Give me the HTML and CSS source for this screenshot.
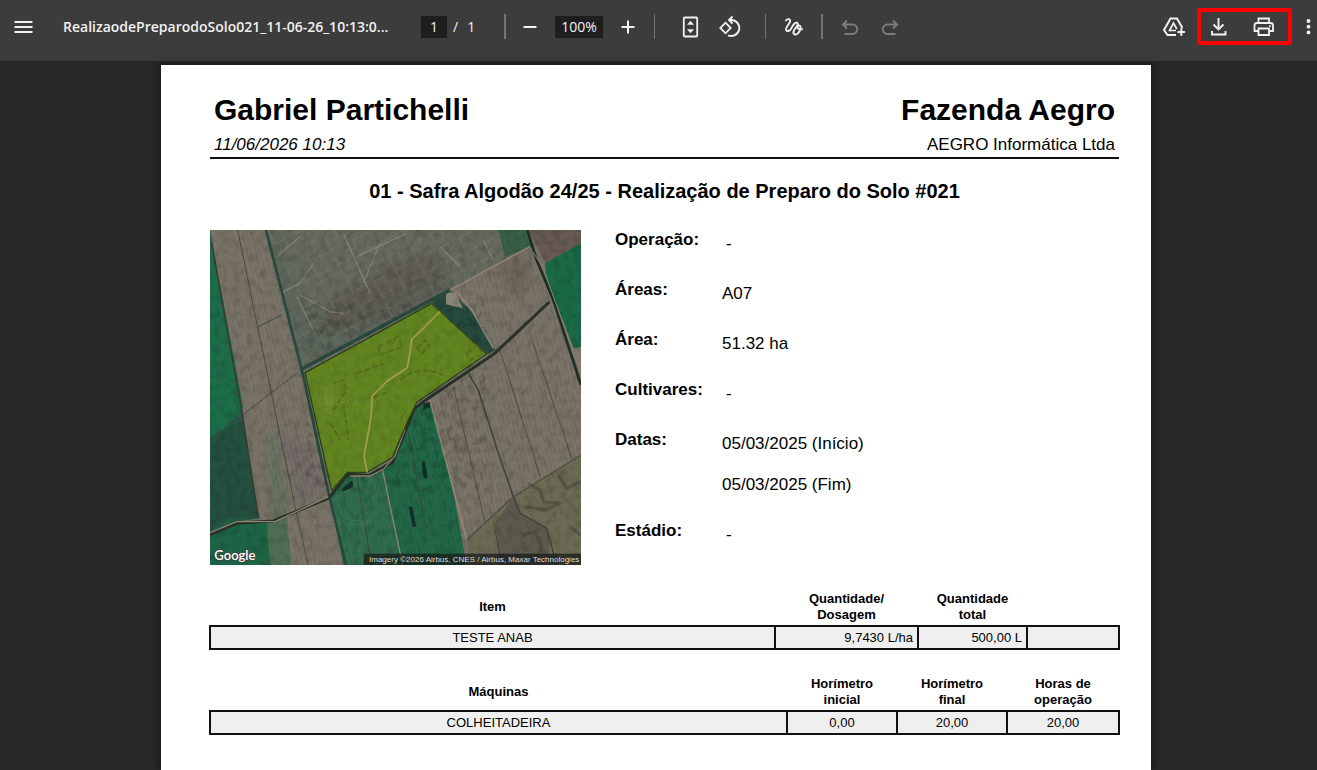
FILE: index.html
```html
<!DOCTYPE html>
<html lang="pt-BR">
<head>
<meta charset="utf-8">
<meta name="viewport" content="width=device-width, initial-scale=1">
<title>Realização de Preparo do Solo #021</title>
<link rel="stylesheet" href="styles.css">
</head>
<body>
<header class="toolbar">
  <button class="icon-btn" type="button" aria-label="Menu">
    <svg viewBox="0 0 24 24"><path d="M2.500 7h18M2.500 12h18M2.500 17h18" stroke-width="1.800"/></svg>
  </button>
  <span class="file-name">RealizaodePreparodoSolo021_11-06-26_10:13:0...</span>
  <div class="pager">
    <input class="field page-field" type="text" value="1" aria-label="Página">
    <span>/</span><span class="page-total">1</span>
  </div>
  <span class="divider thick"></span>
  <div class="tools zoom">
    <button class="icon-btn" type="button" aria-label="Diminuir zoom">
      <svg viewBox="0 0 24 24"><path d="M5.500 12h13" stroke-width="2"/></svg>
    </button>
    <input class="field zoom-field" type="text" value="100%" aria-label="Zoom">
    <button class="icon-btn" type="button" aria-label="Aumentar zoom">
      <svg viewBox="0 0 24 24"><path d="M5.500 12h13M12 5.500v13" stroke-width="2"/></svg>
    </button>
  </div>
  <span class="divider"></span>
  <div class="tools view">
    <button class="icon-btn" type="button" aria-label="Ajustar à página">
      <svg viewBox="0 0 24 24"><rect x="5.800" y="2.500" width="13.400" height="19" rx="1" stroke-width="1.800"/><path d="M12.500 5.800l3.500 4h-7zM12.500 18.300l3.500-4h-7z" fill="currentColor" stroke="none"/></svg>
    </button>
    <button class="icon-btn" type="button" aria-label="Girar">
      <svg viewBox="0 0 24 24"><path d="M7.500 7.700l5.200 5.300-5.200 5.300L2.300 13z" stroke-width="1.800"/><path d="M11 5h2.500a8 8 0 1 1-3.500 15.300M14.500 1.500L11 5l3.500 3.700" stroke-width="1.900"/></svg>
    </button>
  </div>
  <span class="divider"></span>
  <div class="tools ink">
    <button class="icon-btn" type="button" aria-label="Desenhar">
      <svg viewBox="0 0 24 24"><path d="M4.500 6c2-2.800 5-2.300 4.600.3C8.700 9 4.800 11.700 5 14.500c.3 2.900 4 1.700 5.600-1.700 1.400-3 4-6 5.700-4.900 2.300 1.700-2.700 5.300-3.700 8.300-.9 3 2 4.500 4.300 2.200 2.600-2.600 3.600-7.200 1.500-7.800-2.500-.5-4.200 4.300 3.400 3.500" stroke-width="1.900"/></svg>
    </button>
  </div>
  <span class="divider thick"></span>
  <div class="tools history">
    <button class="icon-btn" type="button" aria-label="Desfazer" disabled>
      <svg viewBox="0 0 24 24"><path d="M9 5.500l-4 4 4 4M5 9.500h9.500a4.700 4.700 0 0 1 0 9.400H6.500" stroke-width="2"/></svg>
    </button>
    <button class="icon-btn" type="button" aria-label="Refazer" disabled>
      <svg viewBox="0 0 24 24"><path d="M15 5.500l4 4-4 4M19 9.500H9.500a4.700 4.700 0 0 0 0 9.400h8" stroke-width="2"/></svg>
    </button>
  </div>
  <div class="actions">
    <button class="icon-btn" type="button" aria-label="Salvar no Google Drive">
      <svg viewBox="0 0 24 24"><path d="M14 20H5.500L2 15 8.500 3.500H15L20.500 13" stroke-width="2"/><path d="M14 15.500H7.500l4-7.500 3.300 6" stroke-width="1.700"/><path d="M15.500 17h7.500M19.300 13.200v7.500" stroke-width="2"/></svg>
    </button>
    <div class="highlight">
      <button class="icon-btn" type="button" aria-label="Baixar">
        <svg viewBox="0 0 24 24"><path d="M11.500 3v11M6.500 9.500l5 5 5-5M5 16v3.500h13.500V16" stroke-width="1.900"/></svg>
      </button>
      <button class="icon-btn" type="button" aria-label="Imprimir">
        <svg viewBox="0 0 24 24"><path d="M6.500 8V3.500H17V8M6.500 16h-4v-5.500Q2.500 8 5 8h13.500q2.500 0 2.500 2.500V16h-4M6.500 13.500H17V20H6.500z" stroke-width="1.800"/><circle cx="18" cy="11" r="1" fill="currentColor" stroke="none"/></svg>
      </button>
    </div>
    <button class="icon-btn more" type="button" aria-label="Mais ações">
      <svg viewBox="0 0 16 24"><g fill="currentColor" stroke="none"><circle cx="8.500" cy="6" r="1.900"/><circle cx="8.500" cy="11.700" r="1.900"/><circle cx="8.500" cy="17.400" r="1.900"/></g></svg>
    </button>
  </div>
</header>

<main class="viewer">
  <article class="sheet">
    <header class="letterhead">
      <div>
        <h1>Gabriel Partichelli</h1>
        <p><em>11/06/2026 10:13</em></p>
      </div>
      <div class="farm">
        <h1>Fazenda Aegro</h1>
        <p>AEGRO Informática Ltda</p>
      </div>
    </header>

    <h2>01 - Safra Algodão 24/25 - Realização de Preparo do Solo #021</h2>

    <section class="summary">
      <svg class="map" viewBox="30 30 1113 1005" role="img" aria-label="Mapa da área A07">
        <defs>
          <filter id="grain" x="0" y="0" width="100%" height="100%">
            <feTurbulence type="fractalNoise" baseFrequency="0.05 0.04" numOctaves="4" seed="8"/>
            <feColorMatrix values="0 0 0 0 0  0 0 0 0 0  0 0 0 0 0  1.600 0 0 0 -0.660"/>
          </filter>
          <filter id="soft" x="-10%" y="-10%" width="120%" height="120%"><feGaussianBlur stdDeviation="14"/></filter>
          <pattern id="furrow" width="13" height="60" patternUnits="userSpaceOnUse" patternTransform="rotate(-14)">
            <path d="M3 0v60" stroke="#c0b5a1" stroke-width="2" opacity=".13"/><path d="M9 0v60" stroke="#3d3a32" stroke-width="2" opacity=".1"/>
          </pattern>
          <pattern id="plots" width="72" height="47" patternUnits="userSpaceOnUse" patternTransform="rotate(-27)">
            <path d="M0 0h72M22 0v47M54 16v31M22 25h50" fill="none" stroke="#aaa593" stroke-width="2" opacity=".22"/>
          </pattern>
          <clipPath id="frame"><rect x="30" y="30" width="1113" height="1005"/></clipPath>
        </defs>
        <g clip-path="url(#frame)">
          <rect x="30" y="30" width="1113" height="1005" fill="#787266"/>
          <path d="M200 30H985L1000 80 750 210 310 450z" fill="#65695d"/>
          <path d="M200 30h30l90 250 420-120 10 50-440 240z" fill="#52635a" opacity=".5" filter="url(#soft)"/>
          <path d="M590 120l120-20 40 110-180 80-220 60 50-120z" fill="#5c554e" opacity=".6" filter="url(#soft)"/>
          <path d="M200 30H985L1000 80 750 210 310 450z" fill="url(#plots)"/>
          <path d="M230 110l70-60M290 230l50 100M300 225l90 50 40 5M340 130l-40 60-60 30M720 80l60 60M850 60l30 60M540 70l-50 120M430 40l80 180M470 110l150-70" fill="none" stroke="#aaa28f" stroke-width="4" opacity=".45"/>
          <path d="M30 30l90 520 58 345-68 10-80 40z" fill="#245a45"/>
          <path d="M30 30l10 60 90 470-100 120z" fill="#1e6d49"/>
          <path d="M30 650l100-50 45 290-100 5-45 40z" fill="#244d3e" opacity=".8"/>
          <path d="M30 945l80-35 100-5 50-5 12 135H30z" fill="#1e6446"/>
          <path d="M200 905l60-10 15 140h-65z" fill="#506e54"/>
          <path d="M200 640l25 0 45 245-55 15z" fill="#4f6f52" opacity=".5" filter="url(#soft)"/>
          <path d="M245 640l100 40 30 140-90 40z" fill="#68616a" opacity=".4" filter="url(#soft)"/>
          <path d="M388 830l60-65 60 5 70-50 60-155 55-20 65 260 45 250H435z" fill="#206646"/>
          <path d="M395 840l60-70 95-10 60 275H435z" fill="#2d6b4c"/>
          <path d="M985 30h158v40l-105 60z" fill="#665a52"/>
          <path d="M895 30h85l15 50-80 30z" fill="#386049"/>
          <path d="M1035 130l108-60v310l-22 5-30-80-50-120z" fill="#1a6a47"/>
          <path d="M1125 395l18-10v130z" fill="#877b70"/>
          <path d="M695 245l55-35 80 80 55 100-20 12-90-80z" fill="#264b3e"/>
          <path d="M738 215l30 5 20 45-50-12z" fill="#8b8575"/>
          <path d="M940 830l203-125v330H800l5-80z" fill="#6b6a54"/>
          <path d="M940 830l30 60 75 40 5 105H900l-15-125z" fill="#5e5a4e"/>
          <path d="M40 30L290 860 435 1035H270L30 30z" fill="url(#furrow)"/>
          <path d="M100 30h100l190 800-110 30z" fill="url(#furrow)"/>
          <path d="M750 210l250-130 143 420v210L800 960 690 545l195-155z" fill="url(#furrow)"/>
          <path d="M388 830l60-65 130-40 60-160 55-20 110 490H435z" fill="url(#furrow)" opacity=".7"/>
          <path d="M890 130l90-30 10 100-60 30z" fill="#595347" opacity=".4" filter="url(#soft)"/>
          <path d="M985 790l35 20 10 35 45 5-35 20-65-10M1075 765l25 40 43-20M965 945l40-10 20 45-20 40h-40M1110 920l30 25" fill="none" stroke="#414638" stroke-width="10" opacity=".5"/>
          <rect x="30" y="30" width="1113" height="1005" filter="url(#grain)" opacity=".2"/>
          <g fill="none" stroke="#3e4238" stroke-width="3" opacity=".8">
            <path d="M113 30l100 485 72 345 40 175M128 585l165-127M175 320l70-35M900 390l70 220 50 160M1000 370l115 345M760 500l95 405M880 905l25 130M470 770l45 265M625 640l55 300M50 640l75-50"/>
          </g>
          <path d="M35 70l90 500 50 325" fill="none" stroke="#373d32" stroke-width="5"/>
          <path d="M198 30l110 430 80 370 50 205" fill="none" stroke="#28483d" stroke-width="8"/>
          <path d="M30 945l80-35 110-7 168-70 55-70 65 3 70-40 65-160 40-30 200-135 165-155" fill="none" stroke="#283127" stroke-width="9"/>
          <path d="M30 938l80-33h115l160-75M450 768h60l40-20 35-40 30-80M548 752l60 283" fill="none" stroke="#8b8470" stroke-width="4"/>
          <path d="M690 540l110 420" fill="none" stroke="#918775" stroke-width="5"/>
          <path d="M300 450L750 210" fill="none" stroke="#28493e" stroke-width="10"/>
          <path d="M750 210L990 80M770 215l45 55 65 115" fill="none" stroke="#968c78" stroke-width="4"/>
          <path d="M982 30l28 90 50 120 83 255" fill="none" stroke="#202d25" stroke-width="8"/>
          <path d="M998 95l30 45 45 125 65 180" fill="none" stroke="#8d8374" stroke-width="3"/>
          <path d="M805 460l30 50 60 190 45 130 20 50 80 45 30 110" fill="none" stroke="#41463a" stroke-width="5"/>
          <path d="M1143 705L940 830 800 960" fill="none" stroke="#4d4d40" stroke-width="4"/>
          <path d="M427 805l30-25 3 20-32 15M665 725l10 0 8 50-12 0zM627 860l10 0 12 60-12 0zM670 550l20-3v15l-20 7z" fill="#112f28"/>
          <path d="M315 458l380-208 165 152-210 145-28 60-45 105-75 45h-60l-47 55z" fill="#628520" stroke="#2d431d" stroke-width="4"/>
          <path d="M315 458l380-208 165 152-210 145-28 60-45 105-75 45h-60l-47 55z" filter="url(#grain)" opacity=".14"/>
          <g fill="none" stroke="#4b5a14" stroke-width="6" opacity=".5">
            <path d="M535 380l60-30 10 30-65 25zM650 385l25-25 15 20-25 20zM800 400l30-25 20 25-40 20zM370 500l60-20 10 30-40 60M600 480c50-40 90-30 130-15M390 610l30 50M430 550l15 110M520 530l50-15M470 460l80-30M600 600l15-25" stroke-dasharray="18 7"/>
          </g>
          <path d="M370 500l30-15-2 100-20-5z" fill="#7f9435" opacity=".4"/>
          <path d="M720 275l-55 55-30 28-5 40-8 45-60 40-45 45-5 70-20 110 10 50" fill="none" stroke="#a79d4c" stroke-width="5" stroke-linejoin="round"/>
        </g>
        <text class="map-mark" x="350" y="554">©2026 Google</text>
        <text class="map-mark" x="340" y="914">©2026 Google</text>
        <rect x="491" y="1001" width="652" height="34" fill="#171b17" opacity=".72"/>
        <text class="map-credit" x="1138" y="1026" text-anchor="end">Imagery ©2026 Airbus, CNES / Airbus, Maxar Technologies</text>
        <text class="map-brand" x="43" y="1020">Google</text>
      </svg>

      <dl class="details">
        <dt>Operação:</dt><dd class="empty">-</dd>
        <dt>Áreas:</dt><dd>A07</dd>
        <dt>Área:</dt><dd>51.32 ha</dd>
        <dt>Cultivares:</dt><dd class="empty">-</dd>
        <dt>Datas:</dt><dd class="dates"><span>05/03/2025 (Início)</span><span>05/03/2025 (Fim)</span></dd>
        <dt>Estádio:</dt><dd class="empty">-</dd>
      </dl>
    </section>

    <table class="grid">
      <colgroup><col><col class="dose"><col class="total"><col class="blank"></colgroup>
      <thead><tr><th>Item</th><th>Quantidade/<br>Dosagem</th><th>Quantidade<br>total</th><th></th></tr></thead>
      <tbody><tr><td>TESTE ANAB</td><td class="num">9,7430 L/ha</td><td class="num">500,00 L</td><td></td></tr></tbody>
    </table>

    <table class="grid">
      <colgroup><col><col class="meter"><col class="meter"><col class="hours"></colgroup>
      <thead><tr><th>Máquinas</th><th>Horímetro<br>inicial</th><th>Horímetro<br>final</th><th>Horas de<br>operação</th></tr></thead>
      <tbody><tr><td>COLHEITADEIRA</td><td>0,00</td><td>20,00</td><td>20,00</td></tr></tbody>
    </table>
  </article>
</main>
</body>
</html>
```
FILE: styles.css
```css
* { box-sizing: border-box; }

body {
  margin: 0;
  min-height: 100vh;
  display: flex;
  flex-direction: column;
  background: #282828;
  font-family: "Liberation Sans", Arial, sans-serif;
}

h1, h2, p, dl, dd { margin: 0; }

/* Toolbar */
.toolbar {
  display: flex;
  align-items: center;
  padding: 12px 1px;
  padding-left: 12px;
  padding-bottom: 20px;
  min-height: 61px;
  background: #3c3c3c;
  color: #f1f1f1;
  font: 14px/20px "Open Sans", "Noto Sans", sans-serif;
}

.icon-btn {
  flex: none;
  width: 24px;
  height: 24px;
  padding: 0;
  border: 0;
  background: none;
  color: inherit;
}
.icon-btn:disabled { color: #7c7c7c; }
.icon-btn svg {
  display: block;
  width: 100%;
  height: 100%;
  fill: none;
  stroke: currentColor;
}

.file-name {
  width: 330px;
  margin: 0 28px 0 27px;
  font-weight: 600;
  white-space: nowrap;
}

.pager { display: flex; align-items: center; gap: 6px; margin-right: 29px; }
.page-total { margin-left: 3px; }

.field {
  height: 22px;
  padding: 0;
  border: 0;
  background: #1e1e1e;
  color: inherit;
  font: inherit;
  text-align: center;
}
.page-field { width: 26px; }
.zoom-field { width: 48px; }

.divider { flex: none; width: 1px; height: 25px; background: #747474; }
.divider.thick { width: 2px; }

.tools { display: flex; align-items: center; }
.zoom { gap: 13px; margin: 0 14px 0 12px; }
.view { gap: 16px; margin: 0 23px; }
.ink { margin: 0 16px 0 15px; }
.history { gap: 16px; margin-left: 15px; }

.actions { display: flex; align-items: center; margin: -4px 0 -4px auto; }
.highlight {
  display: flex;
  align-items: center;
  gap: 21px;
  height: 37px;
  margin: 0 8px 0 11px;
  padding: 0 12px 0 6px;
  border: 4px solid #fe0000;
  border-radius: 3px;
}
.more { width: 16px; }

/* Document */
.viewer {
  flex: 1;
  display: flex;
  justify-content: center;
  padding: 4px 5px 0 0;
}

.sheet {
  width: 100%;
  max-width: 990px;
  padding: 27px 31px 0 48px;
  background: #fff;
  color: #000;
  box-shadow: 0 0 8px #111;
}

.letterhead {
  display: flex;
  justify-content: space-between;
  margin: 0 1px;
  padding: 0 4px 2px;
  border-bottom: 2px solid #111;
}
.letterhead h1 { font-size: 30px; line-height: 36px; }
.letterhead p { margin-top: 7px; font-size: 17px; line-height: 20px; }
.farm { text-align: right; }

h2 {
  margin: 20px 0 27px;
  font-size: 20px;
  line-height: 24px;
  text-align: center;
}

.summary { display: flex; gap: 34px; margin: 0 1px 26px; }
.map { flex: none; width: 371px; height: 335px; }
.map-mark { font: 27px "Open Sans", sans-serif; fill: #fff; opacity: .08; }
.map-credit { font: 24px "Liberation Sans", sans-serif; fill: #ddd; }
.map-brand {
  font: 600 39px Lato, sans-serif;
  fill: #fff;
  stroke: #444;
  stroke-width: 4px;
  paint-order: stroke;
}

.details {
  display: grid;
  grid-template-columns: 107px 1fr;
  align-content: start;
  row-gap: 26px;
  font-size: 17px;
  line-height: 20px;
}
.details dt { font-weight: 700; }
.details dd { padding-top: 4px; }
.details .empty { padding-left: 4px; }
.dates { display: grid; gap: 21px; }

.grid {
  width: 100%;
  margin-bottom: 26px;
  border-collapse: collapse;
  table-layout: fixed;
  font-size: 13px;
  line-height: 16px;
}
.grid th { padding: 0 0 2px; }
.grid td {
  height: 23px;
  padding: 2px 4px;
  border: 2px solid #111;
  background: #efefef;
  text-align: center;
}
.grid .num { text-align: right; }
.dose { width: 143px; }
.total { width: 109px; }
.blank { width: 92px; }
.meter { width: 110px; }
.hours { width: 112px; }
```
